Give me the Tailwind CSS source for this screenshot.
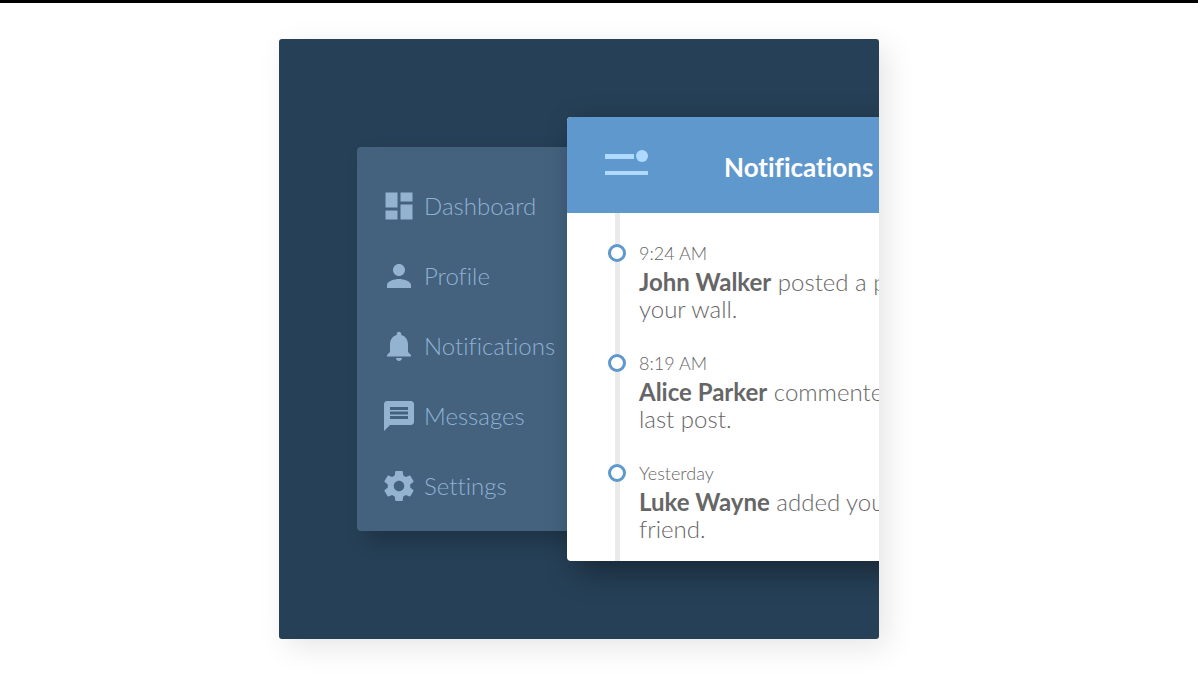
<!DOCTYPE html>
<html lang="en">
<head>
<meta charset="utf-8">
<meta name="viewport" content="width=device-width, initial-scale=1">
<title>Notifications</title>
<script src="https://cdn.jsdelivr.net/npm/@tailwindcss/browser@4"></script>
</head>
<body class="min-h-screen overflow-x-hidden border-t-3 border-black bg-white pt-9 pr-10 font-['Lato','Open_Sans',sans-serif] [font-variant-ligatures:none]">
<main class="mx-auto flex w-full max-w-[600px] items-start overflow-hidden rounded-[3px] bg-[#264057] pt-[78px] pb-[78px] pl-[78px] shadow-[8px_8px_30px_rgba(0,0,0,0.1)]">

  <nav aria-label="Main" class="mt-[30px] w-[210px] shrink-0 rounded-l-[4px] bg-[#44627e] pt-6 pb-[10px] pl-6 text-2xl font-light text-[#8fb1d3] shadow-[10px_10px_20px_rgba(0,0,0,0.22)]">
    <ul>
      <li><a href="#dashboard" class="flex h-[70px] items-center gap-[7px]">
        <svg class="size-9 shrink-0 fill-[#94b3d1]" viewBox="0 0 24 24" aria-hidden="true"><path d="M3 13h8V3H3v10zm0 8h8v-6H3v6zm10 0h8V11h-8v10zm0-18v6h8V3h-8z"/></svg>Dashboard</a></li>
      <li><a href="#profile" class="flex h-[70px] items-center gap-[7px]">
        <svg class="size-9 shrink-0 fill-[#94b3d1]" viewBox="0 0 24 24" aria-hidden="true"><path d="M12 12c2.210 0 4-1.790 4-4s-1.790-4-4-4-4 1.790-4 4 1.790 4 4 4zm0 2c-2.670 0-8 1.340-8 4v2h16v-2c0-2.660-5.330-4-8-4z"/></svg>Profile</a></li>
      <li><a href="#notifications" class="flex h-[70px] items-center gap-[7px]">
        <svg class="size-9 shrink-0 fill-[#94b3d1]" viewBox="0 0 24 24" aria-hidden="true"><path d="M12 22c1.100 0 2-.9 2-2h-4c0 1.100.9 2 2 2zm6-6v-5c0-3.070-1.630-5.640-4.500-6.320V4c0-.83-.67-1.500-1.500-1.500s-1.500.67-1.500 1.500v.68C7.640 5.360 6 7.920 6 11v5l-2 2v1h16v-1l-2-2z"/></svg>Notifications</a></li>
      <li><a href="#messages" class="flex h-[70px] items-center gap-[7px]">
        <svg class="size-9 shrink-0 fill-[#94b3d1]" viewBox="0 0 24 24" aria-hidden="true"><path d="M20 2H4c-1.100 0-1.990.9-1.990 2L2 22l4-4h14c1.100 0 2-.9 2-2V4c0-1.100-.9-2-2-2zM6 9h12v2H6V9zm12 5H6v-2h12v2zm0-6H6V6h12v2z"/></svg>Messages</a></li>
      <li><a href="#settings" class="flex h-[70px] items-center gap-[7px]">
        <svg class="size-9 shrink-0 fill-[#94b3d1]" viewBox="0 0 24 24" aria-hidden="true"><path d="M19.430 12.980c.04-.32.070-.64.070-.98s-.03-.66-.07-.98l2.110-1.650c.19-.15.240-.42.120-.64l-2-3.460c-.12-.22-.39-.3-.61-.22l-2.490 1c-.52-.4-1.080-.73-1.690-.98l-.38-2.650C14.460 2.180 14.250 2 14 2h-4c-.25 0-.46.180-.49.420l-.38 2.650c-.61.250-1.170.590-1.690.98l-2.490-1c-.23-.09-.49 0-.61.220l-2 3.460c-.13.220-.07.490.12.640l2.110 1.650c-.04.320-.07.650-.07.98s.03.660.070.98l-2.110 1.650c-.19.150-.24.420-.12.640l2 3.460c.12.220.39.300.61.220l2.490-1c.52.400 1.080.730 1.690.98l.38 2.650c.03.240.24.420.49.420h4c.25 0 .46-.18.490-.42l.38-2.650c.61-.25 1.170-.59 1.690-.98l2.490 1c.23.090.49 0 .61-.22l2-3.460c.12-.22.070-.49-.12-.64l-2.110-1.650zM12 15.500c-1.930 0-3.500-1.570-3.500-3.500s1.570-3.500 3.500-3.500 3.500 1.570 3.500 3.500-1.570 3.500-3.500 3.500z"/></svg>Settings</a></li>
    </ul>
  </nav>

  <section class="z-10 w-[450px] shrink-0 overflow-hidden rounded-[4px] bg-white text-[#666666] shadow-[10px_10px_30px_rgba(0,0,0,0.4)]">
    <header class="flex h-24 items-start gap-[76px] bg-[#5f98cd] pt-8 pl-[38px]">
      <button type="button" aria-label="Toggle menu" class="shrink-0">
        <svg class="h-[26px] w-[43px] fill-[#b0d9ff]" viewBox="0 0 43 26" aria-hidden="true"><path d="M0 5h29v5H0zM0 22h43v4H0z"/><circle cx="37" cy="7" r="6"/></svg>
      </button>
      <h1 class="text-[26px] leading-9 font-bold text-white">Notifications</h1>
    </header>
    <div class="flex pl-[41px]">
      <ol class="flex w-full flex-col gap-[29px] bg-[linear-gradient(#eaeaea,#eaeaea)] bg-[length:5px_100%] bg-[position:7px_0] bg-no-repeat pt-7 pb-[19px]">
        <li class="flex gap-[13px]">
          <span class="mt-[3px] size-[18px] shrink-0 rounded-full border-3 border-[#5f98cd] bg-white"></span>
          <div><time class="mb-[3px] block text-lg leading-6 font-light">9:24 AM</time>
          <p class="text-2xl leading-[27px] font-light whitespace-nowrap"><b class="font-bold">John Walker</b> posted a photo on<br>your wall.</p></div>
        </li>
        <li class="flex gap-[13px]">
          <span class="mt-[3px] size-[18px] shrink-0 rounded-full border-3 border-[#5f98cd] bg-white"></span>
          <div><time class="mb-[3px] block text-lg leading-6 font-light">8:19 AM</time>
          <p class="text-2xl leading-[27px] font-light whitespace-nowrap"><b class="font-bold">Alice Parker</b> commented your<br>last post.</p></div>
        </li>
        <li class="flex gap-[13px]">
          <span class="mt-[3px] size-[18px] shrink-0 rounded-full border-3 border-[#5f98cd] bg-white"></span>
          <div><time class="mb-[3px] block text-lg leading-6 font-light">Yesterday</time>
          <p class="text-2xl leading-[27px] font-light whitespace-nowrap"><b class="font-bold">Luke Wayne</b> added you as<br>friend.</p></div>
        </li>
      </ol>
    </div>
  </section>
</main>
</body>
</html>
